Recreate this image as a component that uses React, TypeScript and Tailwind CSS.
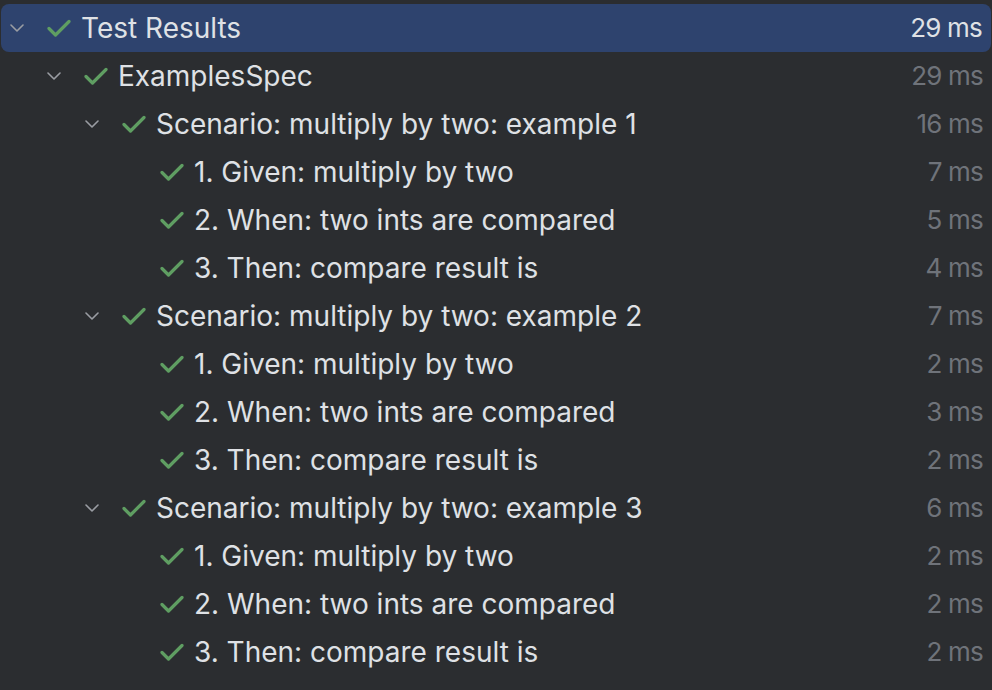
import React from "react";

type Node = {
  label: string;
  time: string;
  level: number;
  expandable?: boolean;
  selected?: boolean;
};

const steps = (t: [string, string, string]): Node[] => [
  { label: "1. Given: multiply by two", time: t[0], level: 3 },
  { label: "2. When: two ints are compared", time: t[1], level: 3 },
  { label: "3. Then: compare result is", time: t[2], level: 3 },
];

const rows: Node[] = [
  { label: "Test Results", time: "29 ms", level: 0, expandable: true, selected: true },
  { label: "ExamplesSpec", time: "29 ms", level: 1, expandable: true },
  { label: "Scenario: multiply by two: example 1", time: "16 ms", level: 2, expandable: true },
  ...steps(["7 ms", "5 ms", "4 ms"]),
  { label: "Scenario: multiply by two: example 2", time: "7 ms", level: 2, expandable: true },
  ...steps(["2 ms", "3 ms", "2 ms"]),
  { label: "Scenario: multiply by two: example 3", time: "6 ms", level: 2, expandable: true },
  ...steps(["2 ms", "2 ms", "2 ms"]),
];

const indent = ["pl-[9px]", "pl-[47px]", "pl-[85px]", "pl-[123px]"];

function Chevron() {
  return (
    <svg width="14" height="8" viewBox="0 0 14 8" fill="none" className="shrink-0">
      <path d="M1 1l6 6 6-6" stroke="#9a9da3" strokeWidth="1.6" strokeLinecap="round" strokeLinejoin="round" />
    </svg>
  );
}

function Check() {
  return (
    <svg width="24" height="18" viewBox="0 0 24 18" fill="none" className="shrink-0">
      <path d="M2 9.5l6.5 6.5L22 2.5" stroke="#5f9e62" strokeWidth="3.2" strokeLinecap="round" strokeLinejoin="round" />
    </svg>
  );
}

export default function App() {
  return (
    <div className="h-[690px] w-[992px] bg-[#2b2d30] pt-1 font-['Inter',sans-serif] overflow-hidden">
      {rows.map((r, i) => (
        <div
          key={i}
          className={`flex h-12 items-center pr-[9px] ${indent[r.level]} ${
            r.selected ? "mx-[1px] rounded-lg bg-[#2e436e] pl-[8px]" : ""
          }`}
        >
          {r.expandable ? <Chevron /> : <span className="w-[14px] shrink-0" />}
          <span className="ml-[23px]">
            <Check />
          </span>
          <span className="ml-[10px] text-[28px] leading-none text-[#dfe1e5]">{r.label}</span>
          <span
            className={`ml-auto text-[26px] leading-none tracking-[-0.8px] ${
              r.selected ? "text-[#dfe1e5]" : "text-[#6f737a]"
            }`}
          >
            {r.time}
          </span>
        </div>
      ))}
    </div>
  );
}
